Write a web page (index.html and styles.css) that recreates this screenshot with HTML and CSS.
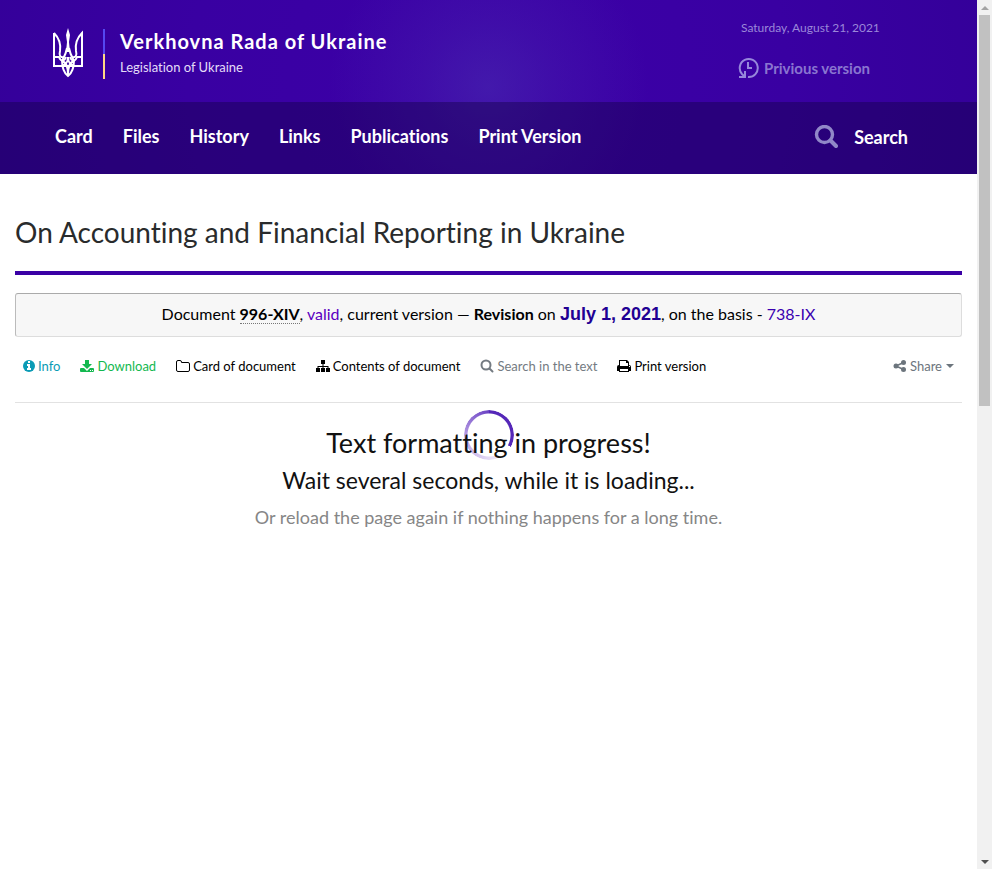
FILE: index.html
```html
<!DOCTYPE html>
<html lang="en">
<head>
<meta charset="utf-8">
<meta name="viewport" content="width=device-width, initial-scale=1">
<title>On Accounting and Financial Reporting in Ukraine</title>
<link rel="stylesheet" href="styles.css">
</head>
<body>
<div class="page">
  <header class="header">
    <div class="masthead">
      <a class="brand" href="#">
        <svg class="trident" viewBox="0 0 32 50" aria-hidden="true">
          <g fill="none" stroke="currentColor" stroke-width="2" stroke-linejoin="miter">
            <path d="M2 5V38H30V5C25 10 23 16 24 23C25 27 24 30 20 29M2 5C7 10 9 16 8 23C7 27 8 30 12 29"/>
            <path d="M15 20C14 26 12 29 10 33M17 20C18 26 20 29 22 33"/>
            <path d="M2 29H7C9 34 12 34 14 29M30 29H25C23 34 20 34 18 29"/>
            <path d="M10 32C10 41 12 45 16 48C20 45 22 41 22 32M10 33C14 34 16 38 16 47C16 38 18 34 22 33M7 38C13 38 16 35 16 29C16 35 19 38 25 38"/>
          </g>
          <path fill="currentColor" d="M16 0L18 7L17 14L18 24H14L15 14L14 7Z"/>
        </svg>
        <span class="flag"></span>
        <span class="brand-text">
          <span class="brand-name">Verkhovna Rada of Ukraine</span>
          <span class="brand-sub">Legislation of Ukraine</span>
        </span>
      </a>
      <div class="meta">
        <span class="date">Saturday, August 21, 2021</span>
        <a class="previous" href="#">
          <svg class="clock" viewBox="0 0 22 22" aria-hidden="true">
            <g fill="none" stroke="currentColor" stroke-width="2">
              <path d="M10 20A9 9 0 1 0 4 17L6 19M1 20H7V14"/>
              <path d="M10 5V11H14"/>
            </g>
          </svg>
          Privious version
        </a>
      </div>
    </div>
    <nav class="nav">
      <a href="#">Card</a>
      <a href="#">Files</a>
      <a href="#">History</a>
      <a href="#">Links</a>
      <a href="#">Publications</a>
      <a href="#">Print Version</a>
      <a class="nav-search" href="#">
        <svg viewBox="0 0 24 24" aria-hidden="true"><g fill="none" stroke="currentColor"><circle cx="10.500" cy="9.500" r="8" stroke-width="3.400"/><path d="M16.500 15.500L22 21" stroke-width="4" stroke-linecap="round"/></g></svg>
        Search
      </a>
    </nav>
  </header>
  <main class="content">
    <h1>On Accounting and Financial Reporting in Ukraine</h1>
    <p class="document">Document <strong class="number">996-XIV</strong>, <a class="valid" href="#">valid</a>, current version — <strong>Revision</strong> on <strong class="revision">July 1, 2021</strong>, on the basis - <a class="basis" href="#">738-IX</a></p>
    <div class="toolbar">
      <a class="info" href="#">
        <svg viewBox="0 0 14 14" aria-hidden="true"><circle cx="7" cy="7" r="6" fill="currentColor"/><path fill="#fff" d="M6 2H8V4H6ZM5 5H8V9H9V11H5V9H6V7H5Z"/></svg>Info</a>
      <a class="download" href="#">
        <svg viewBox="0 0 14 14" aria-hidden="true"><path fill="currentColor" d="M5 1H9V5H12L7 10L2 5H5ZM1 9H4L7 12L10 9H13Q14 9 14 10V12Q14 13 13 13H1Q0 13 0 12V10Q0 9 1 9Z"/><path fill="#fff" d="M10 11H11V12H10ZM12 11H13V12H12Z"/></svg>Download</a>
      <a href="#">
        <svg viewBox="0 0 14 14" aria-hidden="true"><path fill="none" stroke="currentColor" d="M.5 3Q.5 1.500 2 1.500H4Q5.500 1.500 5.500 3V3.500H12Q13.500 3.500 13.500 5V11Q13.500 12.500 12 12.500H2Q.5 12.500 .5 11Z"/></svg>Card of document</a>
      <a href="#">
        <svg viewBox="0 0 14 14" aria-hidden="true"><path fill="currentColor" d="M5 1H9V5H7.500V7H12.500V9H14V13H10V9H11.500V8H7.500V9H9V13H5V9H6.500V8H2.500V9H4V13H0V9H1.500V7H6.500V5H5Z"/></svg>Contents of document</a>
      <a class="muted" href="#">
        <svg viewBox="0 0 14 14" aria-hidden="true"><g fill="none" stroke="currentColor" stroke-width="2"><circle cx="6" cy="6" r="4.500"/><path d="M9.500 9.500L12.500 12.500" stroke-linecap="round"/></g></svg>Search in the text</a>
      <a href="#">
        <svg viewBox="0 0 14 14" aria-hidden="true"><path fill="currentColor" fill-rule="evenodd" d="M2 1H10L12 3V6Q14 6 14 8V12H12V13H2V12H0V8Q0 6 2 6ZM3 2V7H11V4H9V2ZM3 10V12H11V10ZM12 7V8H13V7Z"/></svg>Print version</a>
      <button class="share" type="button">
        <svg viewBox="0 0 14 14" aria-hidden="true"><g fill="currentColor"><circle cx="3" cy="7" r="2.500"/><circle cx="10.500" cy="3.500" r="2.500"/><circle cx="10.500" cy="10.500" r="2.500"/></g><path fill="none" stroke="currentColor" stroke-width="1.500" d="M10.500 3.500L3 7L10.500 10.500"/></svg>Share<span class="caret"></span></button>
    </div>
    <section class="loading" aria-live="polite">
      <span class="spinner"></span>
      <h2>Text formatting in progress!</h2>
      <h3>Wait several seconds, while it is loading...</h3>
      <p>Or reload the page again if nothing happens for a long time.</p>
    </section>
  </main>
</div>
<div class="scrollbar" aria-hidden="true">
  <span class="arrow up"></span>
  <span class="track"><span class="thumb"></span></span>
  <span class="arrow down"></span>
</div>
</body>
</html>
```
FILE: styles.css
```css
* { box-sizing: border-box; }

body {
  display: flex;
  min-height: 100vh;
  margin: 0;
  background: #fff;
  color: #111;
  font-family: Lato, "Liberation Sans", sans-serif;
  font-size: 16px;
  font-variant-ligatures: none;
  line-height: 24px;
}

a { color: inherit; text-decoration: none; }
svg { flex: none; }
.page { flex: 1; min-width: 0; }

.header {
  background:
    radial-gradient(circle at 50% 50%, rgba(72, 45, 175, .55), rgba(70, 35, 172, .35) 70px, transparent 160px),
    radial-gradient(circle at 50% 50%, #3c00a8, #3900a2 300px, #340099 520px);
  color: #fff;
}

.masthead {
  display: flex;
  justify-content: space-between;
  padding: 16px 102px 0 52px;
  height: 102px;
}
.brand { display: flex; align-items: flex-start; padding-top: 12px; }
.trident { width: 32px; height: 50px; }
.flag {
  width: 2px;
  height: 50px;
  margin: 1px 15px 0 19px;
  background: linear-gradient(#5548f0 50%, #ffd884 50%);
}
.brand-text { display: flex; flex-direction: column; }
.brand-name { font-size: 20px; font-weight: 700; line-height: 26px; letter-spacing: 1px; }
.brand-sub { font-size: 13px; line-height: 26px; color: #e4dcf8; }
.meta { display: flex; flex-direction: column; gap: 16px; color: #9b87d9; width: 137px; white-space: nowrap; }
.date { padding-left: 3px; font-size: 12px; }
.previous { display: flex; align-items: center; gap: 4px; font-size: 15px; font-weight: 700; color: #8a75d0; }
.clock { width: 22px; height: 22px; color: #9687db; }

.nav {
  display: flex;
  align-items: center;
  gap: 30px;
  height: 72px;
  padding: 0 69px 4px 55px;
  background: rgba(17, 0, 65, .4);
  font-size: 18px;
  font-weight: 700;
}
.nav-search { display: flex; align-items: center; gap: 16px; margin-left: auto; padding-top: 2px; }
.nav-search svg { width: 24px; height: 24px; color: #9188c8; }

.content { padding: 40px 15px 0; }
h1 {
  margin: 0 0 18px;
  padding-bottom: 20px;
  border-bottom: 4px solid #3a00a5;
  color: #292b2c;
  font-size: 28px;
  font-weight: 400;
  line-height: 37px;
}

.document {
  margin: 0 0 17px;
  padding: 7px 8px 9px;
  border: 1px solid #ddd;
  border-top-color: #aaa;
  border-left-color: #bbb;
  border-radius: 3px;
  background: #f7f7f7;
  color: #000;
  line-height: 26px;
  text-align: center;
}
.number { border-bottom: 1px dotted #777; }
.valid { color: #5b00c0; }
.revision { color: #210093; font-family: "Liberation Sans", sans-serif; font-size: 18px; }
.basis { color: #3a00b0; }

.toolbar {
  display: flex;
  align-items: center;
  gap: 20px;
  padding: 0 8px 24px;
  border-bottom: 1px solid #e2e2e2;
  color: #000;
  font-size: 13px;
}
.toolbar a, .share { display: flex; align-items: center; gap: 3px; white-space: nowrap; }
.toolbar svg { width: 14px; height: 14px; }
.toolbar .info { color: #0b9bb5; gap: 2px; margin-left: -1px; }
.download { color: #13b84f; }
.muted { color: #747b82; }
.share { margin-left: auto; padding: 0; border: 0; background: none; color: #6c757d; font: inherit; }
.caret { margin-left: 1px; border: 4px solid transparent; border-top-color: currentColor; border-bottom: 0; }

.loading { position: relative; padding-top: 22px; text-align: center; }
.loading h2, .loading h3 { margin: 0; font-weight: 400; color: #111; }
.loading h2 { font-size: 27px; line-height: 36px; }
.loading h3 { font-size: 23px; line-height: 38px; }
.loading p { margin: 0; color: #868686; font-size: 18px; line-height: 36px; }
.spinner {
  position: absolute;
  z-index: -1;
  top: 7px;
  left: calc(50% - 25px);
  width: 50px;
  height: 50px;
  border-radius: 50%;
  background: conic-gradient(#5527b8 0deg 118deg, transparent 119deg 155deg, #f0eafa 156deg, #b49ae2 270deg, #6a42c4 360deg);
  mask: radial-gradient(circle, transparent 21px, #000 22px);
}

.scrollbar { display: flex; flex-direction: column; align-items: center; width: 15px; background: #f1f1f1; }
.track { flex: 1; width: 11px; }
.thumb { display: block; height: 391px; background: #c1c1c1; }
.arrow { display: flex; align-items: center; justify-content: center; height: 15px; }
.arrow::before { content: ""; border: 4px solid transparent; }
.up::before { border-top: 0; border-bottom-color: #a3a3a3; }
.down::before { border-bottom: 0; border-top-color: #505050; }
```
